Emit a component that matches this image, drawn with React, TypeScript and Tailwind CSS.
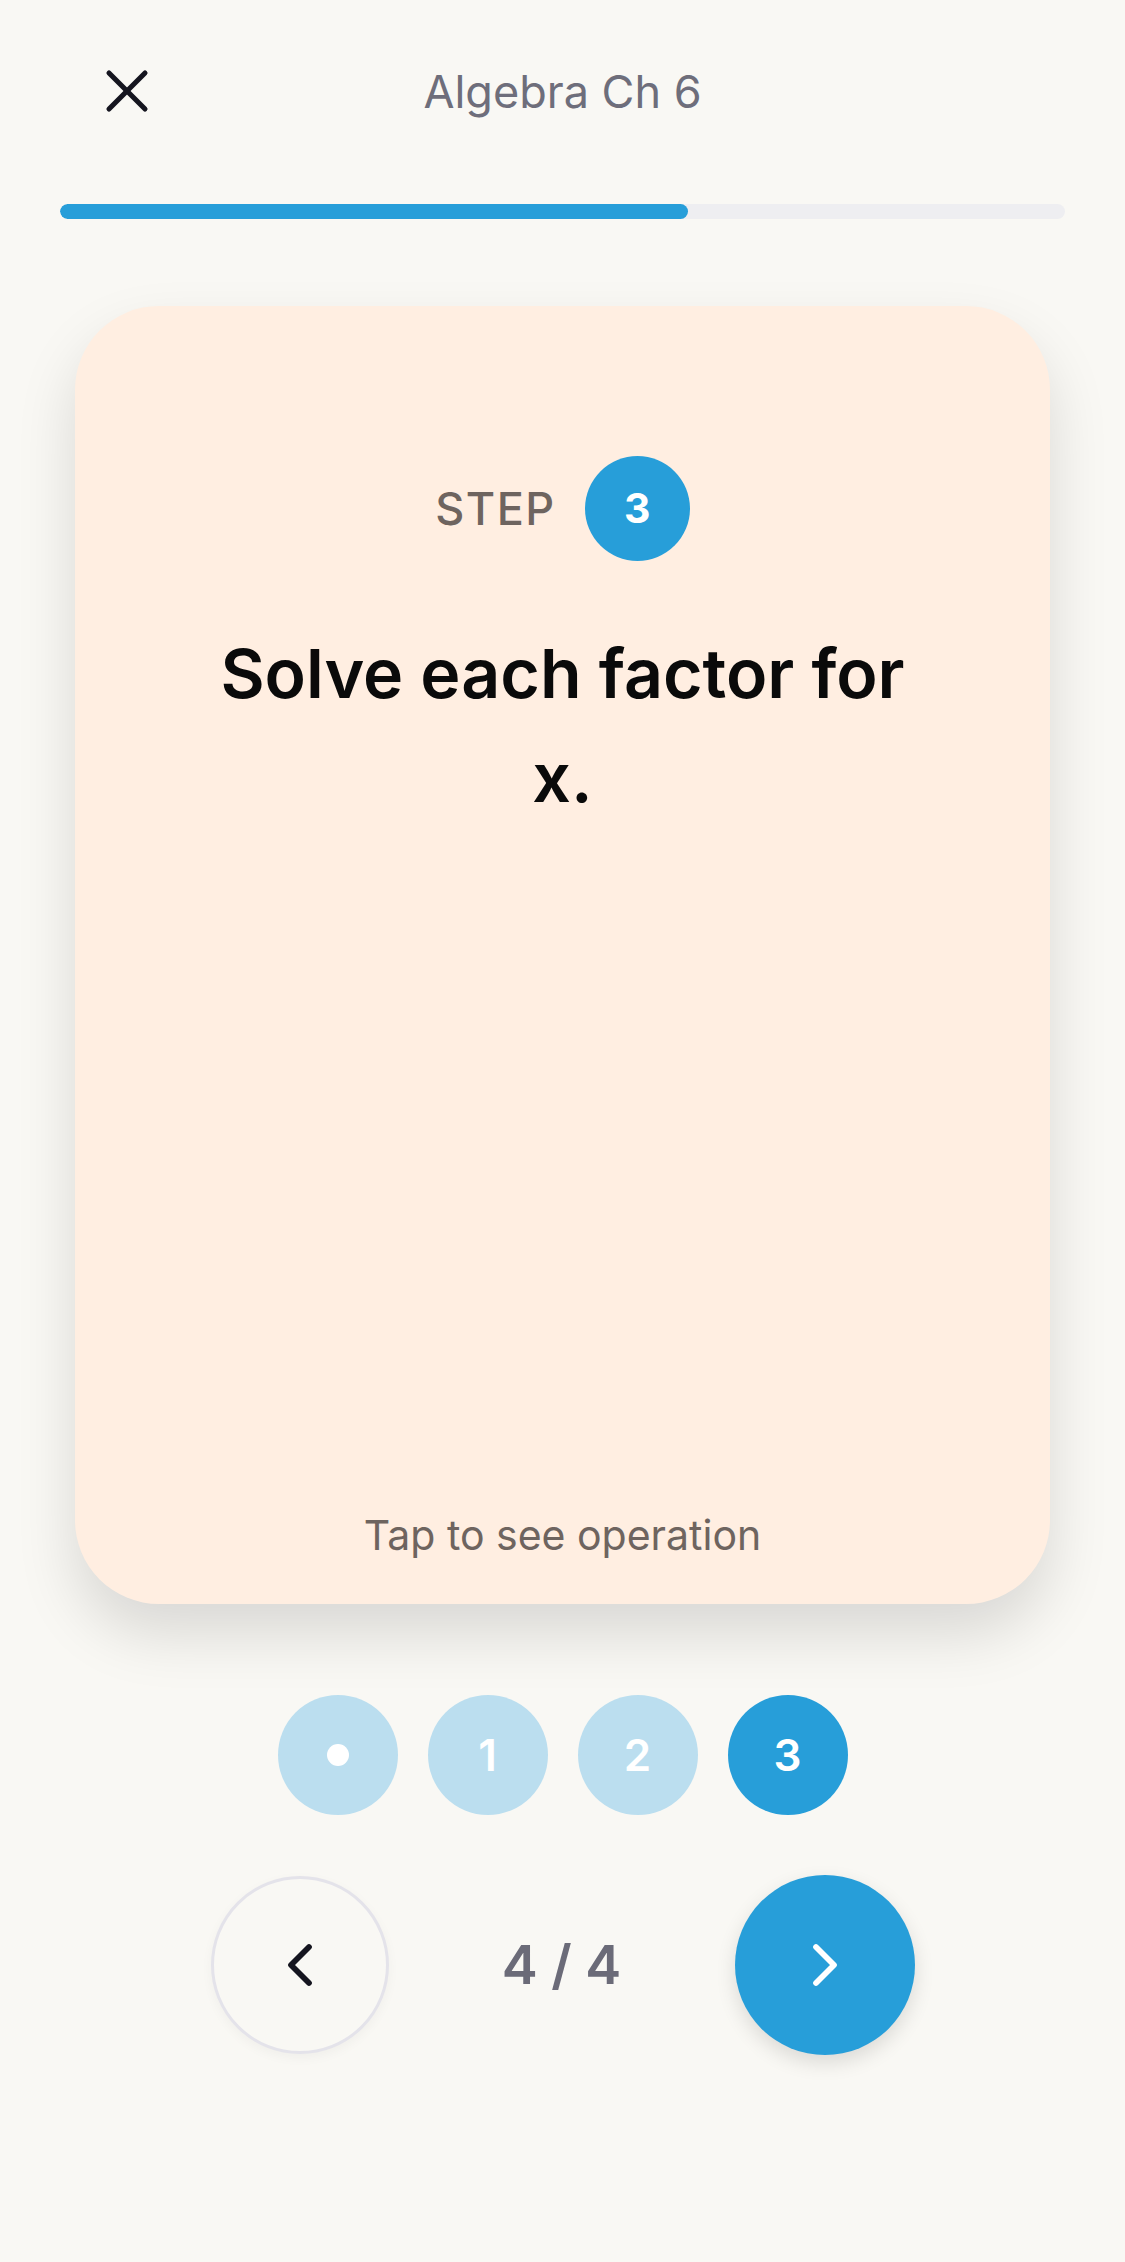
import React from "react";

function XIcon() {
  return (
    <svg width="72" height="72" viewBox="0 0 24 24" fill="none" stroke="#15151f" strokeWidth="1.7" strokeLinecap="round" strokeLinejoin="round">
      <path d="M18 6 6 18" />
      <path d="m6 6 12 12" />
    </svg>
  );
}

function ChevronLeft() {
  return (
    <svg width="72" height="72" viewBox="0 0 24 24" fill="none" stroke="#15151f" strokeWidth="1.9" strokeLinecap="round" strokeLinejoin="round">
      <path d="m15 18-6-6 6-6" />
    </svg>
  );
}

function ChevronRight() {
  return (
    <svg width="72" height="72" viewBox="0 0 24 24" fill="none" stroke="#ffffff" strokeWidth="1.9" strokeLinecap="round" strokeLinejoin="round">
      <path d="m9 18 6-6-6-6" />
    </svg>
  );
}

export default function App() {
  const progress = 62.5;
  return (
    <div
      className="w-[1125px] h-[2262px] bg-[#f9f8f4] flex flex-col"
      style={{ fontFamily: "Inter, 'Noto Sans', sans-serif" }}
    >
      {/* Header */}
      <div className="relative h-[72px] mt-[55px] flex items-center justify-center">
        <button className="absolute left-[91px] top-0 w-[72px] h-[72px] flex items-center justify-center">
          <XIcon />
        </button>
        <div className="text-[45px] leading-none text-[#6e6e7b] font-normal">Algebra Ch 6</div>
      </div>

      {/* Progress */}
      <div className="mx-[60px] mt-[77px] h-[15px] rounded-full bg-[#eeeef1] overflow-hidden">
        <div className="h-full rounded-full bg-[#279ed9]" style={{ width: `${progress}%` }} />
      </div>

      {/* Card */}
      <div className="mx-[75px] mt-[87px] h-[1298px] rounded-[84px] bg-[#ffeee1] shadow-[0_30px_60px_rgba(0,0,0,0.13)] flex flex-col items-center pt-[150px] pb-[39px]">
        <div className="flex items-center gap-[29px]">
          <span className="text-[45px] font-medium tracking-[1.5px] text-[#6e645f] leading-none">STEP</span>
          <div className="w-[105px] h-[105px] rounded-full bg-[#279ed9] flex items-center justify-center text-white text-[41px] font-bold leading-none">
            3
          </div>
        </div>
        <div className="mt-[60px] px-[140px] text-center text-[68px] leading-[104px] font-semibold text-[#0a0a0a]">
          Solve each factor for x.
        </div>
        <div className="mt-auto text-[41px] leading-[60px] text-[#6e645f]">Tap to see operation</div>
      </div>

      {/* Step dots */}
      <div className="mt-[91px] flex justify-center gap-[30px]">
        <div className="w-[120px] h-[120px] rounded-full bg-[#bbdeef] flex items-center justify-center">
          <div className="w-[22px] h-[22px] rounded-full bg-white" />
        </div>
        <div className="w-[120px] h-[120px] rounded-full bg-[#bbdeef] flex items-center justify-center text-white text-[44px] font-semibold leading-none">
          1
        </div>
        <div className="w-[120px] h-[120px] rounded-full bg-[#bbdeef] flex items-center justify-center text-white text-[44px] font-semibold leading-none">
          2
        </div>
        <div className="w-[120px] h-[120px] rounded-full bg-[#279ed9] flex items-center justify-center text-white text-[44px] font-semibold leading-none">
          3
        </div>
      </div>

      {/* Nav */}
      <div className="mt-[60px] flex justify-center items-center">
        <button className="w-[178px] h-[178px] rounded-full border-[3px] border-[#e4e3ea] bg-[#f9f8f4] shadow-[0_4px_12px_rgba(0,0,0,0.04)] flex items-center justify-center">
          <ChevronLeft />
        </button>
        <div className="w-[346px] text-center text-[54px] font-semibold leading-none text-[#6b6b78]">4 / 4</div>
        <button className="w-[180px] h-[180px] rounded-full bg-[#279ed9] shadow-[0_8px_20px_rgba(0,0,0,0.12)] flex items-center justify-center">
          <ChevronRight />
        </button>
      </div>
    </div>
  );
}
